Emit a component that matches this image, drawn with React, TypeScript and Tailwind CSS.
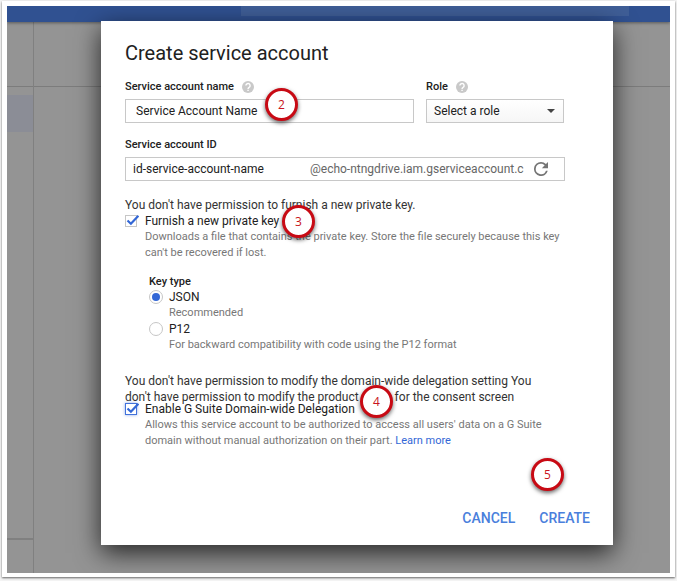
import React, { useState } from 'react';

const Marker: React.FC<{ step: number; className: string }> = ({ step, className }) => (
  <span
    className={`absolute z-10 flex h-[33px] w-[33px] items-center justify-center rounded-full border-[3px] border-[#c80a14] bg-white font-['Open_Sans',sans-serif] text-xs text-[#c81420] shadow-[0_2px_4px_rgba(0,0,0,0.6)] ${className}`}
  >
    {step}
  </span>
);

const HelpButton: React.FC<{ label: string }> = ({ label }) => (
  <button type="button" aria-label={label} className="h-3 w-3">
    <svg viewBox="0 0 24 24" className="h-3 w-3">
      <circle cx="12" cy="12" r="12" fill="#c9c9c9" />
      <path
        d="M7.8 9.2a4.2 4.2 0 1 1 6.6 3.4c-1.5 1-2.3 1.5-2.3 3.2M12.1 17.6v2.4"
        fill="none"
        stroke="#fff"
        strokeWidth="2.8"
      />
    </svg>
  </button>
);

const CheckBox: React.FC<{
  id: string;
  checked: boolean;
  focused?: boolean;
  onChange: (value: boolean) => void;
}> = ({ id, checked, focused, onChange }) => (
  <span className="relative h-3 w-3 shrink-0">
    <input
      id={id}
      type="checkbox"
      checked={checked}
      onChange={(e) => onChange(e.target.checked)}
      className={`block h-3 w-3 appearance-none border bg-white ${
        focused ? 'border-[#4272db] shadow-[0_0_3px_rgba(66,114,219,0.6)]' : 'border-[#c6c6c6]'
      }`}
    />
    {checked && (
      <svg viewBox="0 0 14 12" className="pointer-events-none absolute top-0 left-0 h-3 w-[14px]">
        <path d="M2.5 5.5l3.4 3.2L13.4 0.8" fill="none" stroke="#3367d6" strokeWidth="2.2" />
      </svg>
    )}
  </span>
);

const keyTypes = [
  { value: 'json', label: 'JSON', hint: 'Recommended' },
  { value: 'p12', label: 'P12', hint: 'For backward compatibility with code using the P12 format' },
];

const Backdrop: React.FC = () => (
  <div className="absolute inset-0 flex flex-col bg-[#949494]">
    <div className="z-10 flex h-4 justify-center bg-[#305191] shadow-[0_1px_3px_rgba(0,0,0,0.4)]">
      <div className="mr-[41px] ml-[234px] h-[10px] grow bg-[#3f5e97]"></div>
    </div>
    <div className="flex grow">
      <div className="flex w-[27px] flex-col border-r border-[#808080]">
        <div className="h-[65px] border-b border-[#7c7c7c]"></div>
        <div className="mt-2 h-[37px] bg-[#8b8d96]"></div>
        <div className="mb-[33px] grow border-b-2 border-[#808080]"></div>
      </div>
      <div className="grow">
        <div className="h-[65px] border-b border-[#7c7c7c]"></div>
      </div>
    </div>
  </div>
);

export default function App() {
  const [name, setName] = useState('Service Account Name');
  const [accountId, setAccountId] = useState('id-service-account-name');
  const [furnishKey, setFurnishKey] = useState(true);
  const [keyType, setKeyType] = useState('json');
  const [delegation, setDelegation] = useState(true);

  return (
    <div className="flex min-h-screen flex-col bg-[#f4f4f4] pt-px pr-[2px] pb-1 pl-[2px] font-[Roboto,sans-serif] text-[#212121]">
      <div className="flex grow flex-col bg-white p-[5px] pb-1 shadow-[0_1px_2px_rgba(0,0,0,0.6)]">
        <div className="relative flex grow flex-col overflow-hidden">
          <Backdrop />

          <form
            role="dialog"
            aria-labelledby="dialog-title"
            onSubmit={(e) => e.preventDefault()}
            className="relative z-20 mt-[15px] mr-[57px] mb-7 ml-[94px] flex grow flex-col bg-white pt-[18px] pr-12 pl-6 shadow-[0_8px_24px_rgba(0,0,0,0.75)]"
          >
            <h1 id="dialog-title" className="text-xl leading-7">
              Create service account
            </h1>

            <div className="mt-3 mr-px flex gap-3">
              <div className="relative grow">
                <div className="flex items-center gap-2">
                  <label htmlFor="account-name" className="text-[11px] leading-4 font-medium">
                    Service account name
                  </label>
                  <HelpButton label="About service account name" />
                </div>
                <input
                  id="account-name"
                  type="text"
                  value={name}
                  onChange={(e) => setName(e.target.value)}
                  className="mt-1 block h-6 w-full border border-[#c8c8c8] pl-[10px] text-xs"
                />
                <Marker step={2} className="top-[9px] left-[140px]" />
              </div>
              <div className="w-[138px]">
                <div className="flex items-center gap-2">
                  <label htmlFor="role" className="text-[11px] leading-4 font-medium">
                    Role
                  </label>
                  <HelpButton label="About role" />
                </div>
                <div className="relative mt-1">
                  <select
                    id="role"
                    className="block h-6 w-full appearance-none border border-[#c8c8c8] bg-linear-to-b from-white to-[#f6f6f6] pl-[7px] text-xs"
                  >
                    <option>Select a role</option>
                  </select>
                  <svg viewBox="0 0 8 4" className="pointer-events-none absolute top-[10px] right-[9px] h-1 w-2">
                    <path d="M0 0h8L4 4z" fill="#444" />
                  </svg>
                </div>
              </div>
            </div>

            <label htmlFor="account-id" className="mt-[14px] text-[11px] leading-4 font-medium">
              Service account ID
            </label>
            <div className="mt-1 flex h-6 items-center border border-[#c8c8c8] pr-4 pl-[7px] text-xs">
              <input
                id="account-id"
                type="text"
                value={accountId}
                onChange={(e) => setAccountId(e.target.value)}
                className="w-[177px] outline-none"
              />
              <span className="grow whitespace-nowrap text-[#666]">@echo-ntngdrive.iam.gserviceaccount.c</span>
              <button type="button" aria-label="Regenerate ID">
                <svg viewBox="4 4 16 16" className="h-[14px] w-[14px]">
                  <path
                    d="M17.65 6.35A7.96 7.96 0 0 0 12 4a8 8 0 1 0 7.73 10h-2.08A6 6 0 1 1 12 6c1.66 0 3.14.69 4.22 1.78L13 11h7V4l-2.35 2.35z"
                    fill="#757575"
                  />
                </svg>
              </button>
            </div>

            <p className="mt-4 text-xs text-[#333]">You don't have permission to furnish a new private key.</p>
            <div className="relative flex items-center gap-2">
              <CheckBox id="furnish-key" checked={furnishKey} onChange={setFurnishKey} />
              <label htmlFor="furnish-key" className="text-xs">
                Furnish a new private key
              </label>
              <Marker step={3} className="-top-2 left-[157px]" />
            </div>
            <p className="pl-5 text-[11px] leading-4 text-[#777]">
              Downloads a file that contains the private key. Store the file securely because this key can't be
              recovered if lost.
            </p>

            <fieldset className="mt-[14px] pl-6">
              <legend className="text-[11px] leading-[14px] font-medium">Key type</legend>
              {keyTypes.map((type) => (
                <div key={type.value}>
                  <div className="flex items-center gap-[6px]">
                    <input
                      id={`key-${type.value}`}
                      type="radio"
                      name="key-type"
                      checked={keyType === type.value}
                      onChange={() => setKeyType(type.value)}
                      className="h-[14px] w-[14px] appearance-none rounded-full border border-[#c6c6c6] bg-white bg-clip-content p-[2px] checked:bg-[#3367d6]"
                    />
                    <label htmlFor={`key-${type.value}`} className="text-xs">
                      {type.label}
                    </label>
                  </div>
                  <p className="pl-5 text-[11px] leading-4 text-[#777]">{type.hint}</p>
                </div>
              ))}
            </fieldset>

            <div className="relative mt-5">
              <p className="pr-4 text-xs text-[#333]">
                You don't have permission to modify the domain-wide delegation setting You don't have permission to
                modify the product name for the consent screen
              </p>
              <Marker step={4} className="top-3 left-[235px]" />
            </div>
            <div className="-mt-1 flex items-center gap-2">
              <CheckBox id="delegation" checked={delegation} focused onChange={setDelegation} />
              <label htmlFor="delegation" className="text-xs">
                Enable G Suite Domain-wide Delegation
              </label>
            </div>
            <p className="pl-5 text-[11px] leading-4 text-[#777]">
              Allows this service account to be authorized to access all users' data on a G Suite domain without
              manual authorization on their part.{' '}
              <a href="#" className="text-[#3367d6]">
                Learn more
              </a>
            </p>

            <div className="relative mt-auto -mr-[25px] mb-[17px] flex justify-end gap-6 text-sm font-medium text-[#4a7fdc]">
              <button type="button">CANCEL</button>
              <button type="submit">CREATE</button>
              <Marker step={5} className="-top-[50px] right-[26px]" />
            </div>
          </form>
        </div>
      </div>
    </div>
  );
}
